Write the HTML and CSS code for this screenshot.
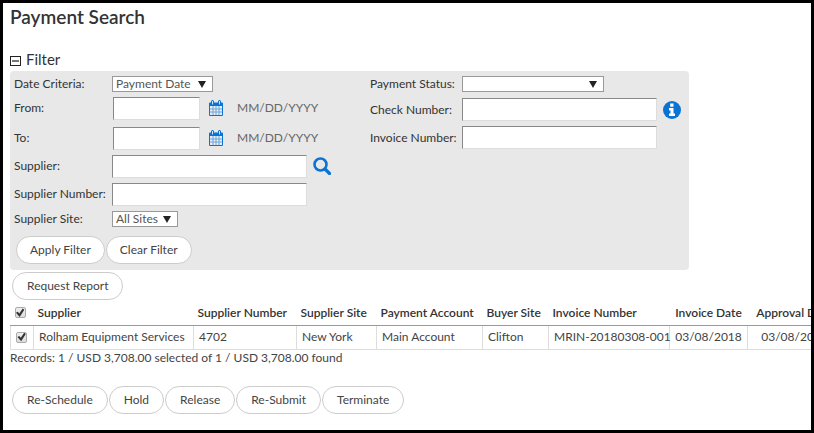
FILE: index.html
```html
<!DOCTYPE html>
<html lang="en">
<head>
<meta charset="utf-8">
<title>Payment Search</title>
<link rel="stylesheet" href="styles.css">
</head>
<body>
<svg class="sprite" aria-hidden="true">
  <symbol id="calendar" viewBox="0 0 14 16">
    <path d="M1 2.500h12a1 1 0 0 1 1 1V15a1 1 0 0 1-1 1H1a1 1 0 0 1-1-1V3.500a1 1 0 0 1 1-1z" fill="#0a74d4"/>
    <path d="M1 6h12v9H1z" fill="#e6edf5"/>
    <path d="M4 6v9M7 6v9M10 6v9M1 9h12M1 12h12" stroke="#6ea5dc" fill="none"/>
    <path d="M3.500 4.500V1.500M10.500 4.500V1.500" stroke="#0a74d4" stroke-width="3" stroke-linecap="round"/>
    <path d="M3.500 4V1.500M10.500 4V1.500" stroke="#dce9f5" stroke-linecap="round"/>
  </symbol>
</svg>
<main class="page">
  <h1 class="title">Payment Search</h1>
  <h2 class="section">
    <button type="button" class="toggle" aria-label="Collapse filter"></button>Filter
  </h2>
  <form class="filter">
    <div class="columns">
      <div class="fields">
        <div class="row short">
          <label for="criteria">Date Criteria:</label>
          <span class="select criteria"><select id="criteria"><option>Payment Date</option></select></span>
        </div>
        <div class="row date">
          <label for="from">From:</label>
          <input class="text date-input" id="from" type="text">
          <button type="button" class="icon" aria-label="Pick from date"><svg width="14" height="16"><use href="#calendar"/></svg></button>
          <span class="hint">MM/DD/YYYY</span>
        </div>
        <div class="row">
          <label for="to">To:</label>
          <input class="text date-input" id="to" type="text">
          <button type="button" class="icon" aria-label="Pick to date"><svg width="14" height="16"><use href="#calendar"/></svg></button>
          <span class="hint">MM/DD/YYYY</span>
        </div>
        <div class="row">
          <label for="supplier">Supplier:</label>
          <input class="text" id="supplier" type="text">
          <button type="button" class="icon near" aria-label="Find supplier"><svg width="18" height="18" viewBox="0 0 18 18" fill="none" stroke="#0a74d4"><circle cx="7.500" cy="7.500" r="6" stroke-width="2.600"/><path d="M12 12l4.500 4.500" stroke-width="3.200" stroke-linecap="round"/></svg></button>
        </div>
        <div class="row">
          <label for="supplier-number">Supplier Number:</label>
          <input class="text" id="supplier-number" type="text">
        </div>
        <div class="row short">
          <label for="site">Supplier Site:</label>
          <span class="select site"><select id="site"><option>All Sites</option></select></span>
        </div>
      </div>
      <div class="fields second">
        <div class="row short">
          <label for="status">Payment Status:</label>
          <span class="select status"><select id="status"><option></option></select></span>
        </div>
        <div class="row">
          <label for="check">Check Number:</label>
          <input class="text" id="check" type="text">
          <button type="button" class="icon near" aria-label="About check numbers"><svg width="18" height="18" viewBox="0 0 18 18"><circle cx="9" cy="9" r="9" fill="#0a74d4"/><path d="M7.200 2.500h3.300v3.200H7.200zM6 7h4.500v5.500H12V15H6v-2.500h1.500v-3H6z" fill="#fff"/></svg></button>
        </div>
        <div class="row">
          <label for="invoice">Invoice Number:</label>
          <input class="text" id="invoice" type="text">
        </div>
      </div>
    </div>
    <div class="buttons inner">
      <button type="button" class="pill">Apply Filter</button>
      <button type="button" class="pill">Clear Filter</button>
    </div>
  </form>
  <div class="buttons report">
    <button type="button" class="pill">Request Report</button>
  </div>
  <div class="results">
    <table>
      <colgroup>
        <col class="c-check"><col class="c-supplier"><col class="c-number"><col class="c-site"><col class="c-account"><col class="c-buyer"><col class="c-invoice"><col class="c-date"><col class="c-approval">
      </colgroup>
      <thead>
        <tr>
          <th class="tick"><input type="checkbox" aria-label="Select all" checked></th>
          <th>Supplier</th><th>Supplier Number</th><th>Supplier Site</th><th>Payment Account</th><th>Buyer Site</th><th>Invoice Number</th><th class="center">Invoice Date</th><th class="center">Approval Date</th>
        </tr>
      </thead>
      <tbody>
        <tr>
          <td class="tick"><input type="checkbox" aria-label="Select MRIN-20180308-001" checked></td>
          <td>Rolham Equipment Services</td><td>4702</td><td>New York</td><td>Main Account</td><td>Clifton</td><td>MRIN-20180308-001</td><td class="center">03/08/2018</td><td class="center">03/08/2018</td>
        </tr>
      </tbody>
    </table>
  </div>
  <p class="records">Records: 1 / USD 3,708.00 selected of 1 / USD 3,708.00 found</p>
  <div class="buttons actions">
    <button type="button" class="pill">Re-Schedule</button>
    <button type="button" class="pill">Hold</button>
    <button type="button" class="pill">Release</button>
    <button type="button" class="pill">Re-Submit</button>
    <button type="button" class="pill">Terminate</button>
  </div>
</main>
</body>
</html>
```
FILE: styles.css
```css
* { box-sizing: border-box; }

body {
  margin: 0;
  background: #fff;
  color: #333;
  font: 12px/16px Lato, "Liberation Sans", sans-serif;
}

input, select, button { font: inherit; color: inherit; margin: 0; }

.sprite { display: none; }

.page {
  min-height: 100vh;
  padding: 2px 0 0 7px;
  border: 3px solid #000;
  overflow: hidden;
}

.title { margin: 0; font-size: 19px; line-height: 24px; font-weight: 600; }

.section {
  display: flex;
  align-items: center;
  gap: 5px;
  margin: 20px 0 2px;
  font-size: 15px;
  line-height: 20px;
  font-weight: 400;
}

.toggle {
  display: grid;
  place-items: center;
  width: 11px;
  height: 10px;
  margin-top: 4px;
  padding: 0;
  border: 1px solid #222;
  background: #fff;
}
.toggle::before { content: ""; width: 7px; height: 2px; background: #777; }

.filter {
  max-width: 679px;
  padding: 4px 4px 6px;
  border-radius: 4px;
  background: #e8e8e8;
}

.columns { display: flex; }
.fields { display: flex; flex-direction: column; gap: 4px; flex: 0 0 356px; }
.fields.second { flex: 1; gap: 5px; }

.row { display: flex; align-items: center; height: 24px; }
.row.short { height: 18px; }
.row.date { height: 25px; align-items: flex-start; }
.row.date > label, .row.date > .hint, .row.date > .icon { margin-top: 3px; }
.row label { flex: 0 0 98px; white-space: nowrap; }
.second .row label { flex-basis: 92px; }
.second .row { height: 23px; }
.second .row.short { height: 18px; }

.text {
  width: 195px;
  height: 23px;
  padding: 2px 4px;
  border: 1px solid #ddd;
  border-top-color: #888;
  border-left-color: #888;
  background: #fff;
}
.date-input { width: 87px; margin-left: 1px; }

.select { position: relative; display: flex; height: 16px; }
.select select {
  width: 100%;
  height: 16px;
  padding: 0 3px;
  border: 1px solid #999;
  border-radius: 0;
  background: #fff;
  color: #555;
  line-height: 14px;
  appearance: none;
}
.select::after {
  content: "";
  position: absolute;
  top: 5px;
  right: 7px;
  width: 8px;
  height: 7px;
  background: #222;
  clip-path: polygon(0 0, 100% 0, 50% 100%);
  pointer-events: none;
}
.criteria { width: 101px; }
.site { width: 66px; }
.status { width: 142px; }

.icon { display: flex; margin-left: 9px; padding: 0; border: 0; background: none; }
.icon.near { margin-left: 6px; }
.hint { margin-left: 14px; color: #666; }

.buttons { display: flex; gap: 1px; margin-left: 2px; }
.buttons.inner { margin-top: 8px; }
.buttons.report { margin-top: 2px; }

.pill {
  height: 28px;
  padding: 0 13px;
  border: 1px solid #ccc;
  border-radius: 14px;
  background: #fff;
  color: #444;
  white-space: nowrap;
}
.report .pill, .actions .pill { padding: 0 14px; }

.results { margin-top: 1px; overflow: hidden; }
table { width: 832px; table-layout: fixed; border-collapse: collapse; }
th, td { height: 24px; padding: 0 0 0 5px; text-align: left; white-space: nowrap; }
th { padding-left: 4px; border-bottom: 1px solid #999; font-weight: 600; }
td { border: 1px solid #ddd; border-top: 0; color: #444; }
th.center, td.center { padding: 0; text-align: center; }
.tick input { display: block; }
.c-check { width: 23px; }
.c-supplier { width: 160px; }
.c-number { width: 103px; }
.c-site { width: 80px; }
.c-account { width: 106px; }
.c-buyer { width: 66px; }
.c-invoice { width: 121px; }
.c-date { width: 78px; }

input[type="checkbox"] {
  display: grid;
  place-items: center;
  width: 11px;
  height: 11px;
  border: 1px solid #aaa;
  border-radius: 2px;
  background: linear-gradient(#eee, #ddd);
  appearance: none;
}
input[type="checkbox"]:checked::before {
  content: "";
  display: block;
  width: 9px;
  height: 9px;
  background: #333;
  clip-path: polygon(5% 50%, 25% 38%, 42% 58%, 80% 2%, 98% 16%, 46% 96%);
}

.records { margin: 0 0 20px; color: #444; }
```
